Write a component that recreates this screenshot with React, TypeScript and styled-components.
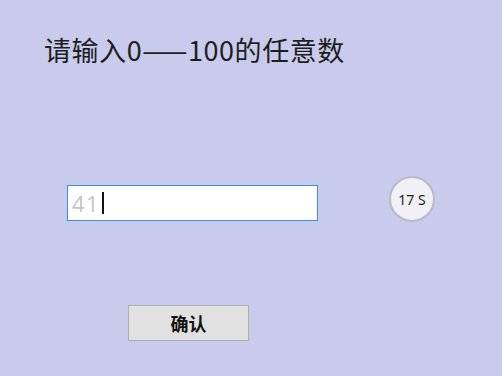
import styled, { createGlobalStyle } from 'styled-components';

const GlobalStyle = createGlobalStyle`
  html, body {
    margin: 0;
    padding: 0;
    background: #c9cbec;
  }
  body {
    font-family: "Noto Sans CJK SC", "Noto Sans", sans-serif;
  }
`;

const Page = styled.div`
  width: 502px;
  height: 376px;
  display: flex;
  flex-direction: column;
  align-items: flex-start;
  box-sizing: border-box;
  overflow: hidden;
`;

const Title = styled.div`
  margin: 35px 0 0 44px;
  font-size: 27px;
  line-height: 30px;
  letter-spacing: 0.55px;
  color: #1e1e1e;
  white-space: nowrap;
`;

const Row = styled.div`
  display: flex;
  align-items: flex-start;
  gap: 71px;
  margin: 111px 0 0 67px;
`;

const InputBox = styled.div`
  width: 251px;
  height: 36px;
  margin-top: 9px;
  box-sizing: border-box;
  border: 1px solid #3b8ed8;
  background: #ffffff;
  display: flex;
  align-items: center;
  padding-left: 4px;
`;

const Value = styled.span`
  font-family: "Open Sans", "Liberation Sans", sans-serif;
  font-size: 22px;
  letter-spacing: 1.5px;
  color: #c4c4c4;
  line-height: 1;
`;

const Caret = styled.span`
  display: inline-block;
  width: 2px;
  height: 22px;
  background: #111;
  margin-left: 2px;
`;

const Timer = styled.div`
  width: 46px;
  height: 46px;
  box-sizing: border-box;
  border-radius: 50%;
  border: 2px solid #b9b9c9;
  background: #f0f0f6;
  display: flex;
  align-items: center;
  justify-content: center;
  font-family: "Noto Sans", sans-serif;
  font-size: 14px;
  color: #1e1e1e;
`;

const ConfirmButton = styled.button`
  margin: 83px 0 0 128px;
  width: 121px;
  height: 36px;
  box-sizing: border-box;
  background: #e1e1e1;
  border: 1px solid #adadad;
  font-family: "Noto Sans CJK SC", sans-serif;
  font-size: 18px;
  font-weight: 700;
  color: #111;
  padding: 0;
  cursor: pointer;
`;

export default function App() {
  return (
    <>
      <GlobalStyle />
      <Page>
        <Title>请输入0——100的任意数</Title>
        <Row>
          <InputBox>
            <Value>41</Value>
            <Caret />
          </InputBox>
          <Timer>17 S</Timer>
        </Row>
        <ConfirmButton>确认</ConfirmButton>
      </Page>
    </>
  );
}
